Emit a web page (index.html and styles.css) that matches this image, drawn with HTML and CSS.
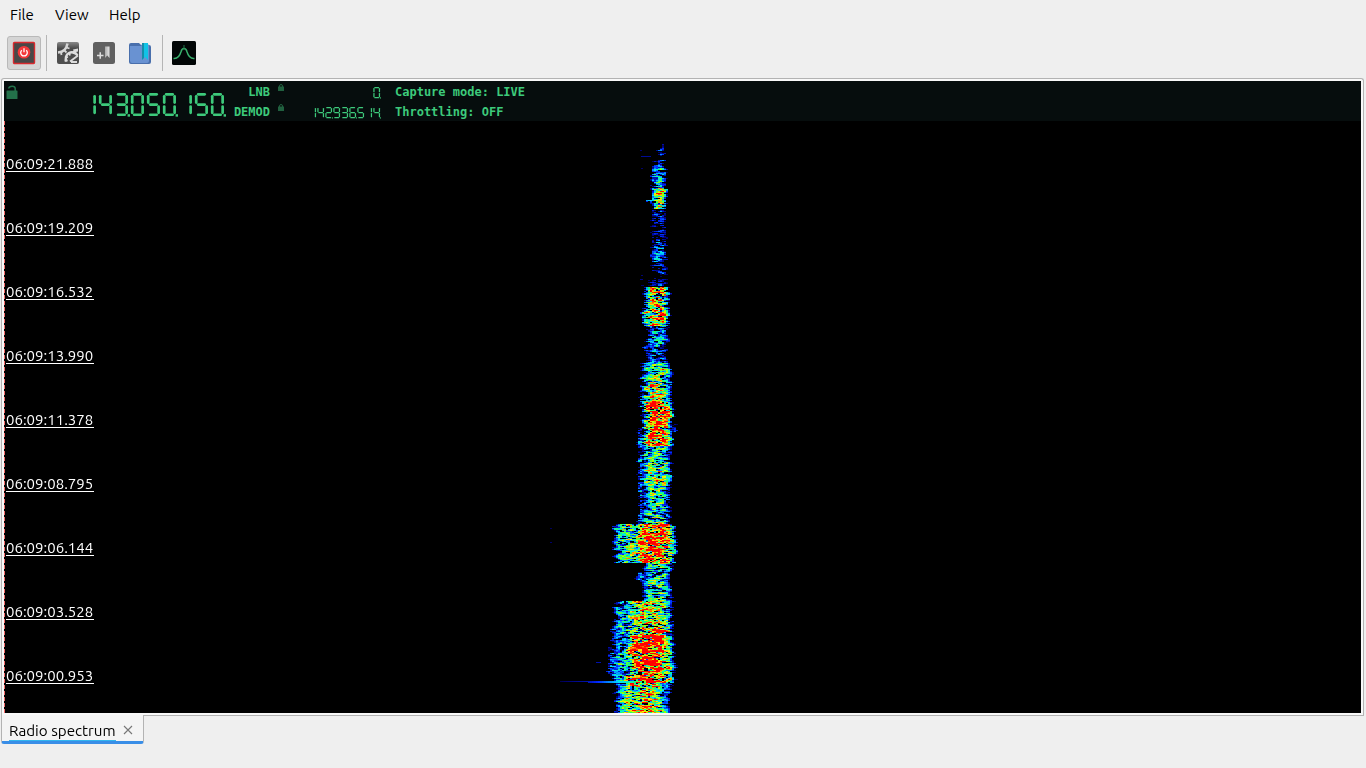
FILE: index.html
```html
<!DOCTYPE html>
<html lang="en">
<head>
<meta charset="utf-8">
<title>Radio spectrum</title>
<link rel="stylesheet" href="styles.css">
</head>
<body>
<nav class="menu"><span class="m-file">File</span><span class="m-view">View</span><span class="m-help">Help</span></nav>
<div class="toolbar">
  <button class="tool power" aria-label="Start capture">
    <svg width="24" height="24" viewBox="0 0 24 24"><rect x="1.5" y="1.5" width="21" height="21" rx="1" fill="#484848" stroke="#d9292e" stroke-width="1.4"/><circle cx="12" cy="11.3" r="6.3" fill="#f2383a"/><path d="M9.800 9.200a3.300 3.300 0 1 0 4.400 0M12 7.300v4" fill="none" stroke="#fff" stroke-width="1.300"/></svg>
  </button>
  <i class="sep"></i>
  <button class="tool gears" aria-label="Settings">
    <svg width="24" height="24" viewBox="0 0 24 24"><defs><linearGradient id="plate" x2="0" y2="1"><stop stop-color="#888"/><stop offset=".3" stop-color="#4a4a4a"/><stop offset="1" stop-color="#505050"/></linearGradient></defs><rect x="1" y="1" width="22" height="22" rx="2" fill="url(#plate)"/><path d="M2 11.500Q10 11 11.500 2.500" fill="none" stroke="#d6d6d6" stroke-width="2.500"/><path d="M5 11l.5 3M8.500 9.500l2 2M10.500 6.500l3 1" stroke="#d6d6d6" stroke-width="1.800"/><path d="M10.500 20.500a6 6 0 0 1 11-6" fill="none" stroke="#dedede" stroke-width="2.400"/><path d="M8.500 19.500h3M9.500 15.500l2.500 1M13 11.500l1 3M18 10l-.5 3" stroke="#dedede" stroke-width="1.800"/><path d="M14 20.500l8-6M15 21h6" stroke="#ddd" stroke-width="1.800"/><path d="M17 8.500l5-1v3l-4 1z" fill="#ddd"/></svg>
  </button>
  <button class="tool addmark" aria-label="Add bookmark">
    <svg width="24" height="24" viewBox="0 0 24 24"><defs><linearGradient id="ribbon"><stop stop-color="#aaa"/><stop offset="1" stop-color="#e4e4e4"/></linearGradient></defs><rect x="1" y="1" width="22" height="22" rx="2.500" fill="#606060"/><path d="M5 14.500h6.500M8.250 11.250v6.500" stroke="#ddd" stroke-width="1.500"/><path d="M13 5.500h4.500v11.500L15.250 14.500 13 17z" fill="url(#ribbon)"/></svg>
  </button>
  <button class="tool marks" aria-label="Bookmarks">
    <svg width="24" height="24" viewBox="0 0 24 24"><path d="M1 4q0-2 2-2h8l2 2h8q2 0 2 2v15q0 2-2 2H3q-2 0-2-2z" fill="#496fac"/><path d="M2 5h11l1-2h5q2 0 2 2v15q0 2-2 2H4q-2 0-2-2z" fill="#6992d2"/><path d="M14 2h6v17l-3-3-3 3z" fill="#11c3e6"/><path d="M14 2h2v15l-2 2z" fill="#168da9"/></svg>
  </button>
  <i class="sep sep2"></i>
  <button class="tool plot" aria-label="Spectrum">
    <svg width="24" height="24" viewBox="0 0 24 24"><rect width="24" height="24" rx="1.500" fill="#020606"/><path d="M1.500 17.500c4 .5 6-1.500 7.600-7 .6-2.500 1.300-3 2.900-3s2.300.5 2.900 3c1.600 5.500 3.600 7.500 7.600 7" fill="none" stroke="#39b16c" stroke-width="1.500"/><path d="M12 4v5" stroke="#217548"/></svg>
  </button>
</div>
<main class="panel">
  <header class="lcd">
    <svg class="padlock" width="12" height="15" viewBox="0 0 12 15"><path d="M2.700 3.500C3.200.5 9.200.500 9.200 3.500V7" fill="none" stroke="#23714a" stroke-width="1.500"/><rect x=".5" y="5.500" width="11" height="8.500" rx=".6" fill="#23714a"/></svg>
    <svg class="seg freq" data-value="143.050.150." data-pitch="16" data-w="10.400" data-h="20.400" data-stroke="2.700" width="144" height="26" role="img" aria-label="143.050.150"></svg>
    <div class="col names"><span>LNB</span><span>DEMOD</span></div>
    <div class="col locks">
      <svg width="6" height="7" viewBox="0 0 6 7"><path d="M1.500 3V2q0-1.500 1.500-1.500T4.500 2v1" fill="none" stroke="#20603f"/><path d="M0 2.500h6V7H0z" fill="#20603f"/></svg>
      <svg width="6" height="7" viewBox="0 0 6 7"><path d="M1.500 3V2q0-1.500 1.500-1.500T4.500 2v1" fill="none" stroke="#20603f"/><path d="M0 2.500h6V7H0z" fill="#20603f"/></svg>
    </div>
    <div class="col small">
      <svg class="seg" data-value="0." data-pitch="8" data-w="5.500" data-h="10" data-stroke="1.250" width="8" height="13" role="img" aria-label="0"></svg>
      <svg class="seg" data-value="142.936.514." data-pitch="8" data-w="5.500" data-h="10" data-stroke="1.250" width="72" height="13" role="img" aria-label="142.936.514"></svg>
    </div>
    <div class="col modes"><span>Capture mode: LIVE</span><span>Throttling: OFF</span></div>
  </header>
  <section class="waterfall">
    <canvas class="plotarea" width="1357" height="592"></canvas>
    <div class="times">
      <span>06:09:21.888</span><span>06:09:19.209</span><span>06:09:16.532</span><span>06:09:13.990</span><span>06:09:11.378</span><span>06:09:08.795</span><span>06:09:06.144</span><span>06:09:03.528</span><span>06:09:00.953</span>
    </div>
  </section>
</main>
<footer class="tabs">
  <div class="tab"><span class="label">Radio spectrum</span><svg class="close" width="10" height="10" viewBox="0 0 10 10"><path d="M1 1l8 8M9 1L1 9" stroke="#777" stroke-width="1.100"/></svg></div>
</footer>
<script src="main.js"></script>
</body>
</html>
```
FILE: styles.css
```css
* { box-sizing: border-box; }
body {
  margin: 0; width: 1366px; height: 768px; overflow: hidden;
  background: #efefef; color: #000;
  font-family: Ubuntu, "Noto Sans", sans-serif; font-size: 15px;
  display: flex; flex-direction: column;
}
.menu { height: 30px; display: flex; padding-left: 10px; line-height: 30px; }
.m-file { width: 45px; }
.m-view { width: 54px; }
.menu span { white-space: nowrap; }
.toolbar { height: 48px; padding: 6px 0 8px 7px; display: flex; align-items: center; }
.tool { border: 0; padding: 0; background: none; width: 24px; height: 24px; flex: none; }
.tool svg { display: block; }
.power { width: 34px; height: 34px; padding: 4px; background: #d5d5d5; border: 1px solid #b9b9b9; border-radius: 3px; }
.sep { width: 1px; height: 36px; background: #b5b5b5; margin: 0 9px 0 5px; }
.addmark, .marks { margin-left: 12px; }
.sep2 { margin: 0 9px 0 10px; }
.panel {
  height: 637px; margin: 0 2px 0 1px; flex: none;
  border: 1px solid #b3b3b3; border-bottom: 0; border-radius: 3px 3px 0 0;
  background: #f8f8f8; padding: 2px;
}
.lcd {
  height: 40px; background: #060d0d; color: #3dca7b; display: flex; align-items: flex-start;
  font: bold 12px/20px "DejaVu Sans Mono", monospace;
}
.padlock { margin: 4px 0 0 2px; flex: none; }
.seg { display: block; flex: none; }
.freq { margin: 12px 0 0 64px; }
.col { display: flex; flex-direction: column; flex: none; }
.col span { white-space: pre; height: 20px; }
.names { width: 44px; align-items: flex-end; padding-top: 1px; }
.locks { margin: 3px 0 0 8px; gap: 13px; }
.small { width: 72px; margin: 6px 0 0 25px; align-items: flex-end; gap: 7px; }
.modes { margin-left: 14px; padding-top: 1px; }
.waterfall { height: 592px; background: #000; display: grid; }
.plotarea, .times { grid-area: 1 / 1; display: block; }
.times { padding: 35px 0 0 2px; display: flex; flex-direction: column; color: #fff; font-size: 15px; }
.times span { width: 88px; height: 16px; line-height: 16px; margin-bottom: 48px; border-bottom: 1px solid #fff; white-space: nowrap; flex: none; }
.tabs { height: 30px; display: flex; flex: none; padding-left: 1px; margin-right: 2px; }
.tabs::after { content: ""; flex: 1; height: 1px; background: #b3b3b3; }
.tab {
  width: 143px; height: 29px; border-left: 1px solid #b3b3b3; border-right: 1px solid #b3b3b3;
  border-bottom: 3px solid #398ee7; background: #f4f4f4; display: flex; align-items: center; padding-left: 7px;
  border-radius: 0 0 3px 3px;
}
.label { width: 107px; height: 26px; line-height: 32px; white-space: nowrap; border-bottom: 1px solid #32b5ee; font-size: 15.200px; }
.close { margin: 3px 0 0 7px; }
```
FILE: main.js
```js
// Seven-segment readouts
const SEGMENTS = {
  0: 'abcdef', 1: 'bc', 2: 'abged', 3: 'abgcd', 4: 'fgbc', 5: 'afgcd',
  6: 'afgedc', 7: 'abc', 8: 'abcdefg', 9: 'abcdfg'
};
document.querySelectorAll('.seg').forEach(svg => {
  const d = svg.dataset, pitch = +d.pitch, w = +d.w, h = +d.h, s = +d.stroke;
  let out = '', cell = -1;
  for (const ch of d.value) {
    if (ch === '.') {
      out += `<rect stroke="none" x="${(cell + 1) * pitch - s * .9}" y="${h + s * .3}" width="${s * .9}" height="${s * .9}"/>`;
      continue;
    }
    cell++;
    const l = (cell + 1) * pitch - w - s * 1.25, r = l + w, t = s / 2, b = t + h, m = (t + b) / 2;
    const g = s * .72;
    const pos = {
      a: [l + g, t, r - g, t], g: [l + g, m, r - g, m], d: [l + g, b, r - g, b],
      f: [l, t + g, l, m - g], b: [r, t + g, r, m - g],
      e: [l, m + g, l, b - g], c: [r, m + g, r, b - g]
    };
    for (const k of SEGMENTS[ch]) {
      const p = pos[k];
      out += `<line x1="${p[0]}" y1="${p[1]}" x2="${p[2]}" y2="${p[3]}"/>`;
    }
  }
  svg.innerHTML = `<g stroke="#3dca7b" fill="#3dca7b" stroke-linecap="round" stroke-width="${s}">${out}</g>`;
});

// Waterfall: cells are 2px wide and 1px tall
const ctx = document.querySelector('.plotarea').getContext('2d');
const OX = 4, OY = 121;
let seed = 90953;
function rnd() {
  seed = (seed + 0x6D2B79F5) | 0;
  let t = Math.imul(seed ^ seed >>> 15, 1 | seed);
  t = t + Math.imul(t ^ t >>> 7, 61 | t) ^ t;
  return ((t ^ t >>> 14) >>> 0) / 4294967296;
}
const STOPS = [[0, 0, 0, 0], [.06, 0, 0, 110], [.2, 0, 40, 255], [.36, 0, 225, 255], [.5, 20, 255, 110], [.63, 160, 255, 0], [.73, 255, 240, 0], [.84, 255, 120, 0], [.92, 255, 0, 0], [9, 255, 0, 0]];
function colour(v) {
  if (v < .04) return null;
  let i = 1;
  while (v > STOPS[i][0]) i++;
  const a = STOPS[i - 1], b = STOPS[i], k = (v - a[0]) / (b[0] - a[0]);
  return `rgb(${[1, 2, 3].map(n => Math.round(a[n] + (b[n] - a[n]) * k)).join()})`;
}
// y0, y1, left, right, level
const BANDS = [
  [144, 147, 658, 664, .06], [147, 157, 657, 665, .12], [160, 168, 653, 665, .1],
  [168, 190, 651, 667, .33], [188, 209, 653, 668, .58], [200, 204, 647, 656, .22],
  [210, 240, 651, 667, .07], [240, 262, 651, 667, .2], [262, 286, 650, 667, .05],
  [287, 300, 643, 670, .8], [300, 312, 644, 670, .7], [312, 326, 643, 670, .74],
  [326, 344, 646, 668, .3], [344, 363, 645, 668, .22],
  [363, 382, 642, 671, .54], [382, 402, 641, 672, .64],
  [402, 446, 641, 673, .98], [446, 462, 641, 671, .5], [462, 485, 640, 671, .62],
  [428, 524, 638, 643, .2], [485, 524, 641, 671, .46],
  [524, 563, 632, 677, 1.05], [524, 563, 614, 642, .48],
  [563, 590, 642, 672, .47], [572, 580, 636, 645, .2], [590, 601, 641, 673, .46],
  [601, 635, 622, 673, .7], [601, 683, 613, 636, .36],
  [620, 637, 643, 672, .8], [635, 683, 622, 675, 1.03],
  [683, 713, 615, 671, .68],
  [424, 433, 671, 677, .1], [363, 420, 640, 650, .1], [646, 674, 608, 620, .22]
];
const CELLS = 68;
const edges = BANDS.map(() => [0, 0]);
let prev = new Array(CELLS).fill(0);
for (let y = 144; y < 713; y++) {
  const raw = Array.from({ length: CELLS + 2 }, () => rnd() < .08 ? -1.2 : rnd() - .44);
  // Neighbouring bins leak into each other; successive lines partly overlap
  const row = prev.map((p, i) => p * .25 + raw[i] * .45 + raw[i + 1] * 1.2 + raw[i + 2] * .45);
  prev = row;
  edges.forEach((e, k) => {
    const amount = BANDS[k][3] - BANDS[k][2] > 20 ? 5 : 3;
    e[0] = e[0] * .6 + (rnd() - .5) * amount;
    e[1] = e[1] * .6 + (rnd() - .5) * amount * .7;
  });
  for (let i = 0; i < CELLS; i++) {
    const x = 550 + i * 2;
    let v = 0;
    BANDS.forEach(([y0, y1, l, r, level], k) => {
      if (y < y0 || y >= y1) return;
      const left = l + edges[k][0], right = r + edges[k][1];
      if (x + 1 < left || x + 1 > right) return;
      const u = Math.abs((x + 1 - (left + right) / 2) / ((right - left) / 2));
      const shape = 1 - Math.pow(Math.min(1, u), 2.800);
      v = Math.max(v, level * shape * .93 + row[i] * (.19 + level * .32) * (shape + .25));
    });
    const fill = colour(v);
    if (fill) { ctx.fillStyle = fill; ctx.fillRect(x - OX, y - OY, 2, 1); }
  }
}
// Sparse echoes left of the carrier
for (const [x, y, w, v] of [[641, 156, 10, .1], [640, 150, 2, .06], [641, 168, 2, .06], [641, 275, 2, .07], [640, 279, 3, .08], [550, 528, 2, .05], [550, 542, 2, .06], [596, 662, 5, .12], [641, 285, 3, .06]]) {
  ctx.fillStyle = colour(v); ctx.fillRect(x - OX, y - OY, w, 1);
}
for (let x = 560; x < 636; x += 2) {
  ctx.fillStyle = colour(x < 588 ? .045 + (x - 560) * .003 : .13 + (x - 588) * .0075) || '#000';
  ctx.fillRect(x - OX, 681 - OY, 2, 1);
  if (x > 586) { ctx.fillStyle = colour((x - 570) * .0075); ctx.fillRect(x - OX, 682 - OY, 2, 1); }
}
ctx.fillStyle = '#f56d6d';
for (let y = 0; y < 592; y += 6) ctx.fillRect(0, y, 1, 4);
```
